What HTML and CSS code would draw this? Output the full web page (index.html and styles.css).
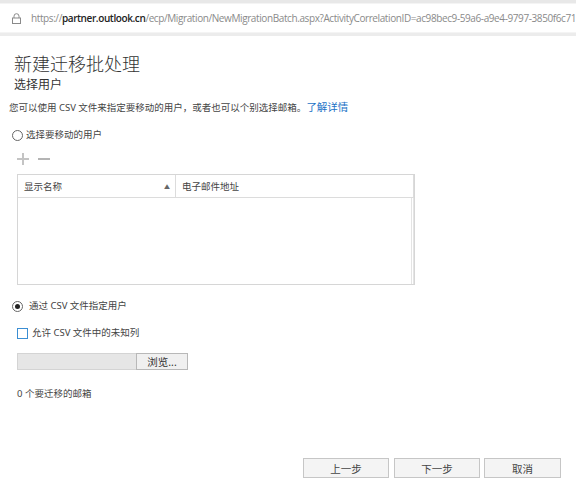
FILE: index.html
```html
<!DOCTYPE html>
<html>
<head>
<meta charset="utf-8">
<link rel="stylesheet" href="styles.css">
</head>
<body>
<div class="addr">
  <div class="addr-inner">
    <svg class="lock" width="9" height="11" viewBox="0 0 9 11"><path d="M2 5V3.2a2.5 2.5 0 0 1 5 0V5" fill="none" stroke="#8a8a8a" stroke-width="1"/><rect x="0.5" y="5" width="8" height="5.5" fill="none" stroke="#8a8a8a" stroke-width="1"/></svg>
    <span class="url"><span class="dim">https://</span><span class="host">partner.outlook.cn</span><span class="dim">/ecp/Migration/NewMigrationBatch.aspx?ActivityCorrelationID=ac98bec9-59a6-a9e4-9797-3850f6c71</span></span>
  </div>
</div>
<div class="page">
  <h1 class="title">新建迁移批处理</h1>
  <h2 class="subtitle">选择用户</h2>
  <p class="desc">您可以使用 CSV 文件来指定要移动的用户，或者也可以个别选择邮箱。<a class="link">了解详情</a></p>

  <div class="radio-row first">
    <span class="radio"></span><span>选择要移动的用户</span>
  </div>
  <div class="tools">
    <svg width="12" height="12" viewBox="0 0 12 12"><path d="M6 0v12M0 6h12" stroke="#c4c4c4" stroke-width="2"/></svg>
    <svg width="12" height="12" viewBox="0 0 12 12"><path d="M0 6h12" stroke="#b4b4b4" stroke-width="2"/></svg>
  </div>
  <div class="grid">
    <div class="grid-head">
      <div class="col col1"><span>显示名称</span><span class="sort">▲</span></div>
      <div class="col col2">电子邮件地址</div>
    </div>
    <div class="grid-body"></div>
  </div>

  <div class="radio-row second">
    <span class="radio checked"></span><span>通过 CSV 文件指定用户</span>
  </div>
  <div class="check-row">
    <span class="check"></span><span>允许 CSV 文件中的未知列</span>
  </div>
  <div class="file">
    <div class="file-box"></div>
    <div class="file-btn">浏览...</div>
  </div>
  <p class="count">0 个要迁移的邮箱</p>
</div>
<div class="footer">
  <div class="btn">上一步</div>
  <div class="btn next">下一步</div>
  <div class="btn cancel">取消</div>
</div>
</body>
</html>
```

FILE: styles.css
```css
html, body {
  margin: 0;
  padding: 0;
  background: #fff;
  font-family: "Noto Sans", "Noto Sans CJK SC", sans-serif;
  color: #333;
}
.addr {
  border-top: 3px solid #e8e8e8;
  border-bottom: 3px solid #ececec;
  background: #f4f4f4;
  padding: 1px 0;
}
.addr-inner {
  height: 28px;
  background: #fff;
  display: flex;
  align-items: center;
  padding-left: 12px;
  white-space: nowrap;
  overflow: hidden;
}
.lock { margin-right: 10px; flex: none; }
.url {
  font-family: "Open Sans", "Noto Sans", sans-serif;
  font-size: 10px;
  letter-spacing: -0.4px;
}
.dim { color: #8a8a8a; }
.host { color: #222; font-weight: 600; }
.page {
  padding: 14px 0 0 11px;
}
.title {
  margin: 0 0 0 3px;
  font-size: 18px;
  font-weight: 300;
  color: #333;
  line-height: 26px;
  font-family: "Noto Sans CJK SC", sans-serif;
}
.subtitle {
  margin: 0 0 0 3px;
  font-size: 12px;
  font-weight: normal;
  color: #333;
  line-height: 15px;
  font-family: "Noto Sans CJK SC", sans-serif;
}
.desc {
  margin: 9px 0 0 -2px;
  font-size: 9.5px;
  color: #444;
  line-height: 14px;
}
.link { color: #1a72c6; font-size: 10.5px; }
.radio-row {
  display: flex;
  align-items: center;
  font-size: 9.5px;
  line-height: 14px;
  color: #444;
}
.radio-row.first { margin-top: 13px; }
.radio {
  width: 9px; height: 9px;
  border: 1px solid #666;
  border-radius: 50%;
  margin: 0 3px 0 1px;
  display: inline-block;
  position: relative;
  flex: none;
}
.radio.checked::after {
  content: "";
  position: absolute;
  left: 2px; top: 2px;
  width: 5px; height: 5px;
  border-radius: 50%;
  background: #222;
}
.tools {
  display: flex;
  gap: 9px;
  margin: 10px 0 0 6px;
  height: 13px;
  align-items: center;
}
.grid {
  margin: 9px 0 0 6px;
  width: 396px;
  border: 1px solid #d6d6d6;
}
.grid-head {
  display: flex;
  height: 22px;
  border-bottom: 1px solid #dcdcdc;
  font-size: 9.5px;
  color: #444;
}
.col { display: flex; align-items: center; }
.col1 {
  width: 146px;
  padding: 0 5px 0 6px;
  justify-content: space-between;
  border-right: 1px solid #dcdcdc;
}
.sort { font-size: 6px; color: #666; }
.col2 { padding-left: 6px; flex: 1; border-right: 1px solid #dcdcdc; }
.grid-body {
  height: 86px;
  border-right: 3px double #e4e4e4;
}
.radio-row.second { margin-top: 14px; }
.radio-row.second .radio { margin-right: 6px; }
.check-row {
  display: flex;
  align-items: center;
  margin: 13px 0 0 6px;
  font-size: 9.5px;
  line-height: 14px;
  color: #444;
}
.check {
  width: 9px; height: 9px;
  border: 1px solid #3b8ed3;
  margin-right: 4px;
  flex: none;
}
.file {
  display: flex;
  margin: 13px 0 0 6px;
  height: 17px;
}
.file-box {
  width: 118px;
  background: #e6e6e6;
  border: 1px solid #d4d4d4;
  border-right: none;
}
.file-btn {
  width: 50px;
  border: 1px solid #b8b8b8;
  background: #f0f0f0;
  font-size: 10.5px;
  color: #333;
  display: flex;
  align-items: center;
  justify-content: center;
}
.count {
  margin: 17px 0 0 6px;
  font-size: 9.5px;
  line-height: 14px;
  color: #444;
}
.footer {
  display: flex;
  justify-content: flex-end;
  gap: 4px;
  padding-right: 15px;
  margin-top: 57px;
}
.btn {
  width: 84px;
  height: 18px;
  border: 1px solid #c6c6c6;
  background: #f4f4f4;
  font-size: 10.5px;
  color: #444;
  display: flex;
  align-items: center;
  justify-content: center;
}
.btn.next { margin-left: 1px; }
.btn.cancel { width: 75px; }
```
